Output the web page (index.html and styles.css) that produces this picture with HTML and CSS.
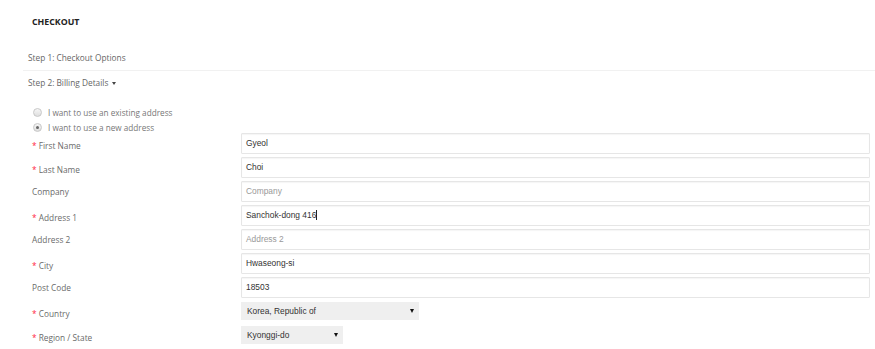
FILE: index.html
```html
<!DOCTYPE html>
<html lang="en">
<head>
  <meta charset="UTF-8">
  <meta name="viewport" content="width=device-width, initial-scale=1.0">
  <title>Checkout</title>
  <link rel="stylesheet" href="styles.css">
</head>
<body>
  <div id="checkout">
    <h1 class="title">CHECKOUT</h1>
    <div class="step step-done">Step 1: Checkout Options</div>
    <div class="step">Step 2: Billing Details <span class="caret"></span></div>
    <div class="radios">
      <div class="radio"><span class="dot"></span>I want to use an existing address</div>
      <div class="radio"><span class="dot checked"></span>I want to use a new address</div>
    </div>
    <div class="form">
      <label class="req">First Name</label>
      <div class="input">Gyeol</div>
      <label class="req">Last Name</label>
      <div class="input">Choi</div>
      <label>Company</label>
      <div class="input placeholder">Company</div>
      <label class="req">Address 1</label>
      <div class="input">Sanchok-dong 416<span class="cursor"></span></div>
      <label>Address 2</label>
      <div class="input placeholder">Address 2</div>
      <label class="req">City</label>
      <div class="input">Hwaseong-si</div>
      <label>Post Code</label>
      <div class="input">18503</div>
      <label class="req">Country</label>
      <div class="field"><div class="select country">Korea, Republic of<span class="arrow"></span></div></div>
      <label class="req">Region / State</label>
      <div class="field"><div class="select region">Kyonggi-do<span class="arrow"></span></div></div>
    </div>
  </div>
</body>
</html>
```

FILE: styles.css
```css
body {
  margin: 0;
  background: #fff;
  font-family: "Open Sans", sans-serif;
  color: #666;
}
#checkout {
  padding-left: 23px;
}
.title {
  margin: 12px 0 14px 9px;
  font-size: 8.8px;
  line-height: 20px;
  font-weight: 700;
  color: #222;
}
.step {
  font-size: 8.3px;
  line-height: 23px;
  padding-left: 5px;
  color: #666;
}
.step-done {
  line-height: 24px;
  border-bottom: 1px solid #f1f1f1;
}
.caret {
  display: inline-block;
  vertical-align: middle;
  width: 0;
  height: 0;
  margin-left: 1px;
  border-left: 2.5px solid transparent;
  border-right: 2.5px solid transparent;
  border-top: 3px solid #444;
}
.radios {
  padding: 11px 0 0 10px;
  height: 28px;
  font-size: 8.2px;
  color: #777;
}
.radio {
  display: flex;
  align-items: center;
  height: 14px;
}
.radio + .radio {
  margin-top: 1px;
}
.dot {
  position: relative;
  width: 7px;
  height: 7px;
  margin-right: 6px;
  border: 1px solid #c8c8c8;
  border-radius: 50%;
  background: linear-gradient(#f6f6f6, #dedede);
}
.dot.checked::after {
  content: "";
  position: absolute;
  left: 2px;
  top: 2px;
  width: 3px;
  height: 3px;
  border-radius: 50%;
  background: #666;
}
.form {
  display: grid;
  grid-template-columns: 209px 1fr;
  grid-auto-rows: 21px;
  row-gap: 3px;
  padding: 0 5px 0 9px;
}
.form label {
  font-size: 8.3px;
  line-height: 21px;
  color: #6a6a6a;
}
.form label.req {
  line-height: 18px;
  padding-top: 4px;
}
.form label.req::before {
  content: "* ";
  color: #f24;
}
.input {
  border: 1px solid #e6e6e6;
  border-radius: 1px;
  box-shadow: inset 0 1px 1px rgba(0, 0, 0, .04);
  padding-left: 4px;
  font-family: "Liberation Sans", Arial, sans-serif;
  font-size: 8.4px;
  line-height: 19px;
  color: #333;
}
.input.placeholder {
  color: #999;
}
.cursor {
  display: inline-block;
  vertical-align: middle;
  width: 1px;
  height: 10px;
  margin-top: -2px;
  background: #222;
}
.field {
  padding-top: 1px;
}
.select {
  display: flex;
  align-items: center;
  justify-content: space-between;
  height: 18px;
  padding: 0 5px 0 6px;
  background: #efefef;
  font-family: "Liberation Sans", Arial, sans-serif;
  font-size: 8.4px;
  color: #333;
  box-sizing: border-box;
}
.country {
  width: 178px;
}
.region {
  width: 102px;
}
.arrow {
  width: 0;
  height: 0;
  border-left: 2px solid transparent;
  border-right: 2px solid transparent;
  border-top: 4px solid #111;
}
```
